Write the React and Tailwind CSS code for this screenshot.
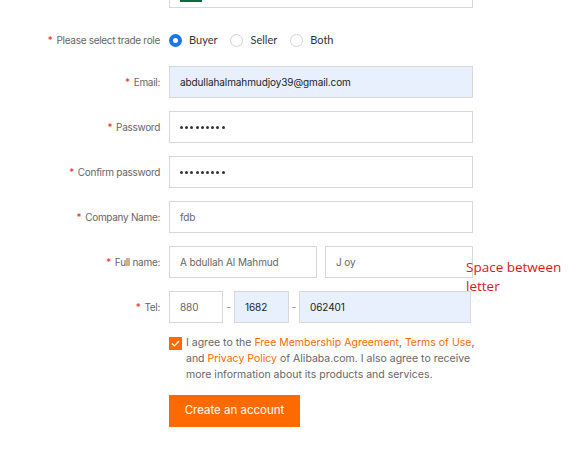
import React from 'react';

const Label = ({ children }) => (
  <div className="w-[160px] shrink-0 text-right text-[10px] tracking-[-0.3px] text-[#666]">
    <span className="text-[#e62e2e] mr-[4px]">*</span>
    {children}
  </div>
);

const Field = ({ value, filled, dark, className = '' }) => (
  <div
    className={`h-[32px] border border-[#d8d8d8] flex items-center px-[10px] text-[10px] tracking-[-0.1px] ${
      filled ? 'bg-[#e8f0fe]' : 'bg-white'
    } ${dark ? 'text-[#222]' : 'text-[#666]'} ${className}`}
  >
    {value}
  </div>
);

const Dots = () => (
  <div className="h-[32px] w-full border border-[#d8d8d8] bg-white flex items-center px-[10px] gap-[2.2px]">
    {Array.from({ length: 9 }).map((_, i) => (
      <span key={i} className="w-[3px] h-[3px] rounded-full bg-[#333]" />
    ))}
  </div>
);

const Row = ({ label, children }) => (
  <div className="flex items-center">
    <Label>{label}</Label>
    <div className="ml-[9px] w-[304px] flex items-center">{children}</div>
  </div>
);

const Radio = ({ checked, label }) => (
  <div className="flex items-center mr-[13px]">
    {checked ? (
      <span className="w-[13px] h-[13px] rounded-full bg-[#1b74e8] flex items-center justify-center">
        <span className="w-[5px] h-[5px] rounded-full bg-white" />
      </span>
    ) : (
      <span className="w-[13px] h-[13px] rounded-full border border-[#d4d4d4] bg-white" />
    )}
    <span className="ml-[7px] text-[11px] text-[#333] font-['Lato',sans-serif]">{label}</span>
  </div>
);

export default function App() {
  return (
    <div className="w-[568px] h-[453px] bg-white font-['Inter',sans-serif] relative overflow-hidden">
      {/* tail of the field above */}
      <div className="ml-[169px] w-[304px] h-[8px] border-x border-b border-[#d8d8d8]">
        <div className="ml-[10px] w-[22px] h-[2px] bg-[#0b6b40]" />
      </div>

      <div className="mt-[22px] flex items-center h-[20px]">
        <Label>Please select trade role</Label>
        <div className="ml-[9px] flex items-center">
          <Radio checked label="Buyer" />
          <Radio label="Seller" />
          <Radio label="Both" />
        </div>
      </div>

      <div className="mt-[16px] flex flex-col gap-[13px]">
        <Row label="Email:">
          <Field value="abdullahalmahmudjoy39@gmail.com" filled dark className="w-full" />
        </Row>
        <Row label="Password">
          <Dots />
        </Row>
        <Row label="Confirm password">
          <Dots />
        </Row>
        <Row label="Company Name:">
          <Field value="fdb" className="w-full" />
        </Row>
        <Row label="Full name:">
          <div className="flex items-center gap-[8px] w-full">
            <Field value="A bdullah Al Mahmud" className="w-[148px]" />
            <Field value="J oy" className="w-[148px]" />
          </div>
        </Row>
        <Row label="Tel:">
          <Field value="880" className="w-[54px]" />
          <span className="w-[11px] text-center text-[11px] text-[#999]">-</span>
          <Field value="1682" filled dark className="w-[55px]" />
          <span className="w-[10px] text-center text-[11px] text-[#999]">-</span>
          <Field value="062401" filled dark className="w-[172px]" />
        </Row>
      </div>

      <div className="mt-[12px] ml-[169px] w-[304px] flex items-start">
        <span className="mt-[2px] w-[13px] h-[13px] shrink-0 bg-[#ff6a00] flex items-center justify-center">
          <svg width="9" height="7" viewBox="0 0 9 7" fill="none">
            <path d="M1 3.5L3.5 6L8 1" stroke="white" strokeWidth="1.2" />
          </svg>
        </span>
        <p className="ml-[4px] text-[10.5px] leading-[16px] text-[#666] whitespace-nowrap">
          I agree to the <span className="text-[#ff6a00]">Free Membership Agreement</span>,{' '}
          <span className="text-[#ff6a00]">Terms of Use</span>,
          <br />
          and <span className="text-[#ff6a00]">Privacy Policy</span> of Alibaba.com. I also agree to receive
          <br />
          more information about its products and services.
        </p>
      </div>

      <button className="mt-[12px] ml-[169px] w-[131px] h-[32px] bg-[#ff6a00] text-white text-[11.5px]">
        Create an account
      </button>

      <div className="absolute left-[466px] top-[258px] text-[13.5px] leading-[19px] text-[#e0141e] font-['Open_Sans',sans-serif]">
        Space between
        <br />
        letter
      </div>
    </div>
  );
}
